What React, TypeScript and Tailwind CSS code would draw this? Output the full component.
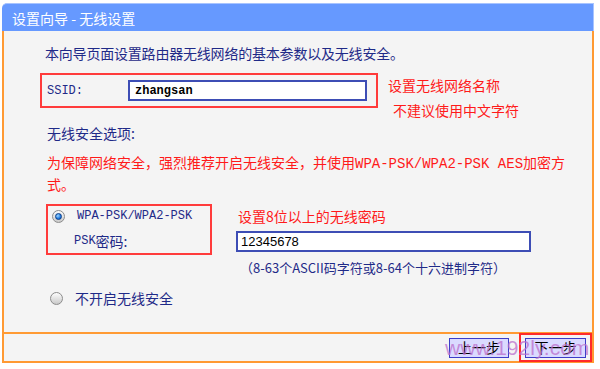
import React from "react";

const CJK = "font-['Noto_Sans_CJK_SC',sans-serif]";
const MONO = "font-['Liberation_Mono','Noto_Sans_CJK_SC',monospace]";

const Radio = ({ checked }: { checked?: boolean }) => (
  <span className="flex h-[13px] w-[13px] shrink-0 items-center justify-center rounded-full border border-[#8c8c8c] bg-gradient-to-b from-[#fdfdfd] to-[#c9c9c9]">
    {checked && (
      <span className="h-[7px] w-[7px] rounded-full border border-[#0b3e8a] bg-[radial-gradient(circle_at_35%_35%,#9fd6ff,#1f7be0_60%,#0b4aa8)]" />
    )}
  </span>
);

export default function App() {
  return (
    <div className={`relative h-[369px] w-[600px] overflow-hidden bg-white ${CJK}`}>
      <div className="ml-[2px] mt-[3px] w-[592px]">
        <header className="flex h-[28px] items-center rounded-tl-[5px] border-t border-r border-[#a8c4ff] bg-[#6699ff] pl-[10px] text-[14px] leading-none text-white">
          设置向导 - 无线设置
        </header>

        <div className="h-[301px] border-x-2 border-[#ff9a33] bg-[#f4f4f4] text-[#1f2a88]">
          <p className="ml-[41px] pt-[12px] text-[14px] leading-[20px] tracking-[-0.2px]">
            本向导页面设置路由器无线网络的基本参数以及无线安全。
          </p>

          <div className="mt-[10px] flex items-start">
            <div className="ml-[36px] flex h-[35px] w-[338px] items-center border-2 border-[#ff3b3b] pl-[5px]">
              <span className={`w-[81px] text-[12px] ${MONO}`}>SSID:</span>
              <div className="flex h-[21px] w-[239px] items-center border-2 border-[#3d4db5] bg-white pl-[5px]">
                <span className={`text-[12px] font-bold text-black ${MONO}`}>zhangsan</span>
              </div>
            </div>
            <div className="ml-[10px] mt-[2px] text-[14px] leading-[20px] text-[#ff1a1a]">
              <p>设置无线网络名称</p>
              <p className="ml-[5px] mt-[5px]">不建议使用中文字符</p>
            </div>
          </div>

          <p className="ml-[43px] mt-[3px] text-[14px] leading-[20px]">无线安全选项:</p>

          <p className="ml-[43px] mt-[9px] text-[14px] leading-[20px] text-[#ff1a1a]">
            为保障网络安全，强烈推荐开启无线安全，并使用<span className={MONO}>WPA-PSK/WPA2-PSK AES</span>加密方<br />式。
          </p>

          <div className="mt-[10px] flex items-start">
            <div className="ml-[42px] h-[51px] w-[166px] border-2 border-[#ff3b3b]">
              <div className="flex h-[20px] items-center pl-[4px]">
                <Radio checked />
                <span className={`ml-[12px] text-[12px] ${MONO}`}>WPA-PSK/WPA2-PSK</span>
              </div>
              <div className={`mt-[5px] flex h-[20px] items-center pl-[26px] text-[12px] ${MONO}`}>
                PSK<span className={`${CJK} text-[14px]`}>密码:</span>
              </div>
            </div>
            <div className="ml-[24px] mt-[2px]">
              <p className="pl-[2px] text-[14px] leading-[20px] text-[#ff1a1a]">设置8位以上的无线密码</p>
              <div className="mt-[5px] flex h-[21px] w-[295px] items-center border-2 border-[#3d4db5] bg-white pl-[3px]">
                <span className="font-['Liberation_Sans',sans-serif] text-[13px] text-black">12345678</span>
              </div>
              <p className="mt-[6px] pl-[4px] text-[13px] leading-[20px]">
                （8-63个ASCII码字符或8-64个十六进制字符）
              </p>
            </div>
          </div>

          <div className="ml-[46px] mt-[10px] flex h-[20px] items-center">
            <Radio />
            <span className="ml-[12px] text-[14px]">不开启无线安全</span>
          </div>
        </div>

        <div className="flex h-[31px] items-center justify-end border-2 border-[#ff9a33] bg-[#f4f4f4]">
          <button className="flex h-[20px] w-[60px] items-center justify-center border border-[#3c3cc8] bg-[#dadaff] text-[14px] text-black">
            上一步
          </button>
          <div className="ml-[10px] flex h-[29px] items-center border-2 border-[#ff2a2a] px-[4px]">
            <button className="flex h-[20px] w-[61px] items-center justify-center border border-[#3c3cc8] bg-[#dadaff] text-[14px] text-black">
              下一步
            </button>
          </div>
        </div>
      </div>

      <span className="pointer-events-none absolute left-[445px] top-[335px] z-10 whitespace-nowrap font-['Liberation_Sans',sans-serif] text-[21px] leading-[26px] text-[#bb6fcc]/75">
        www.192ly.com
      </span>
    </div>
  );
}
